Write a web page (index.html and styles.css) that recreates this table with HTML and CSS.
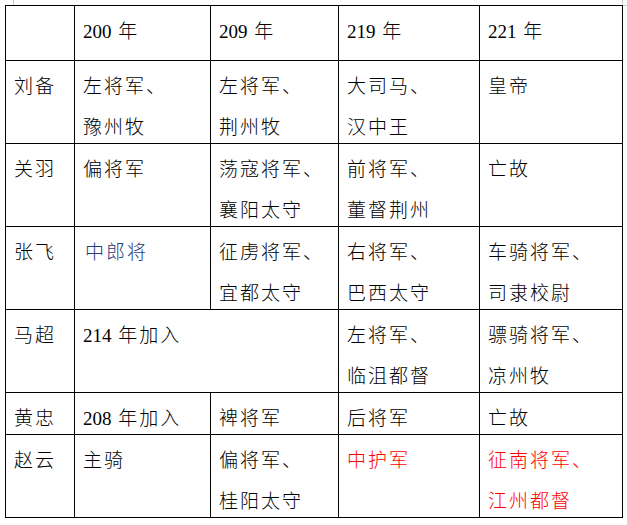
FILE: index.html
```html
<!DOCTYPE html>
<html lang="zh-CN">
<head>
<meta charset="utf-8">
<title>三国官职表</title>
<link rel="stylesheet" href="styles.css">
</head>
<body>
<div class="page">
  <span class="crop crop-tl"></span>
  <span class="crop crop-tr-v"></span>
  <span class="crop crop-tr-h"></span>
  <table class="grid">
    <colgroup>
      <col class="c0"><col class="c1"><col class="c2"><col class="c3"><col class="c4">
    </colgroup>
    <tr class="head">
      <td><div class="t"></div></td>
      <td><div class="t"><span class="num">200</span> 年</div></td>
      <td><div class="t"><span class="num">209</span> 年</div></td>
      <td><div class="t"><span class="num">219</span> 年</div></td>
      <td><div class="t"><span class="num">221</span> 年</div></td>
    </tr>
    <tr>
      <td><div class="t">刘备</div></td>
      <td><div class="t">左将军、<br>豫州牧</div></td>
      <td><div class="t">左将军、<br>荆州牧</div></td>
      <td><div class="t">大司马、<br>汉中王</div></td>
      <td><div class="t">皇帝</div></td>
    </tr>
    <tr>
      <td><div class="t">关羽</div></td>
      <td><div class="t">偏将军</div></td>
      <td><div class="t">荡寇将军、<br>襄阳太守</div></td>
      <td><div class="t">前将军、<br>董督荆州</div></td>
      <td><div class="t">亡故</div></td>
    </tr>
    <tr>
      <td><div class="t">张飞</div></td>
      <td><div class="t blue indent">中郎将</div></td>
      <td><div class="t">征虏将军、<br>宜都太守</div></td>
      <td><div class="t">右将军、<br>巴西太守</div></td>
      <td><div class="t">车骑将军、<br>司隶校尉</div></td>
    </tr>
    <tr class="short">
      <td><div class="t">马超</div></td>
      <td colspan="2"><div class="t"><span class="num">214</span> 年加入</div></td>
      <td><div class="t">左将军、<br>临沮都督</div></td>
      <td><div class="t">骠骑将军、<br>凉州牧</div></td>
    </tr>
    <tr>
      <td><div class="t">黄忠</div></td>
      <td><div class="t"><span class="num">208</span> 年加入</div></td>
      <td><div class="t">裨将军</div></td>
      <td><div class="t">后将军</div></td>
      <td><div class="t">亡故</div></td>
    </tr>
    <tr>
      <td><div class="t">赵云</div></td>
      <td><div class="t">主骑</div></td>
      <td><div class="t">偏将军、<br>桂阳太守</div></td>
      <td><div class="t red">中护军</div></td>
      <td><div class="t red">征南将军、<br>江州都督</div></td>
    </tr>
  </table>
</div>
</body>
</html>
```
FILE: styles.css
```css
html, body {
  margin: 0;
  padding: 0;
  background: #fff;
}

.page {
  position: relative;
  width: 627px;
  height: 525px;
  padding: 5px 0 0 5px;
  box-sizing: border-box;
}

.crop {
  position: absolute;
  background: #c8c8c8;
}
.crop-tl { left: 13px; top: 0; width: 1px; height: 5px; }
.crop-tr-v { left: 622px; top: 0; width: 1px; height: 4px; }
.crop-tr-h { left: 623px; top: 5px; width: 4px; height: 1px; }

.grid {
  border-collapse: collapse;
  table-layout: fixed;
  width: 618px;
  font-family: "Liberation Serif", "Noto Sans CJK SC", serif;
  font-weight: 300;
  font-size: 19px;
  color: #000;
}

.c0 { width: 69px; }
.c1 { width: 136px; }
.c2 { width: 128px; }
.c3 { width: 141px; }
.c4 { width: 143px; }

.grid td {
  border: 1px solid #000;
  vertical-align: top;
  padding: 5px 8px 0 8px;
  line-height: 41px;
  letter-spacing: 2px;
  white-space: nowrap;
}

.grid .t {
  margin-bottom: -5px;
}

.head td {
  height: 49px;
  padding-top: 5px;
}

.num {
  letter-spacing: 0;
  font-weight: 400;
}

.blue { color: #1f3d7a; }
.red { color: #ff0000; }
.indent { padding-left: 2px; }
```
